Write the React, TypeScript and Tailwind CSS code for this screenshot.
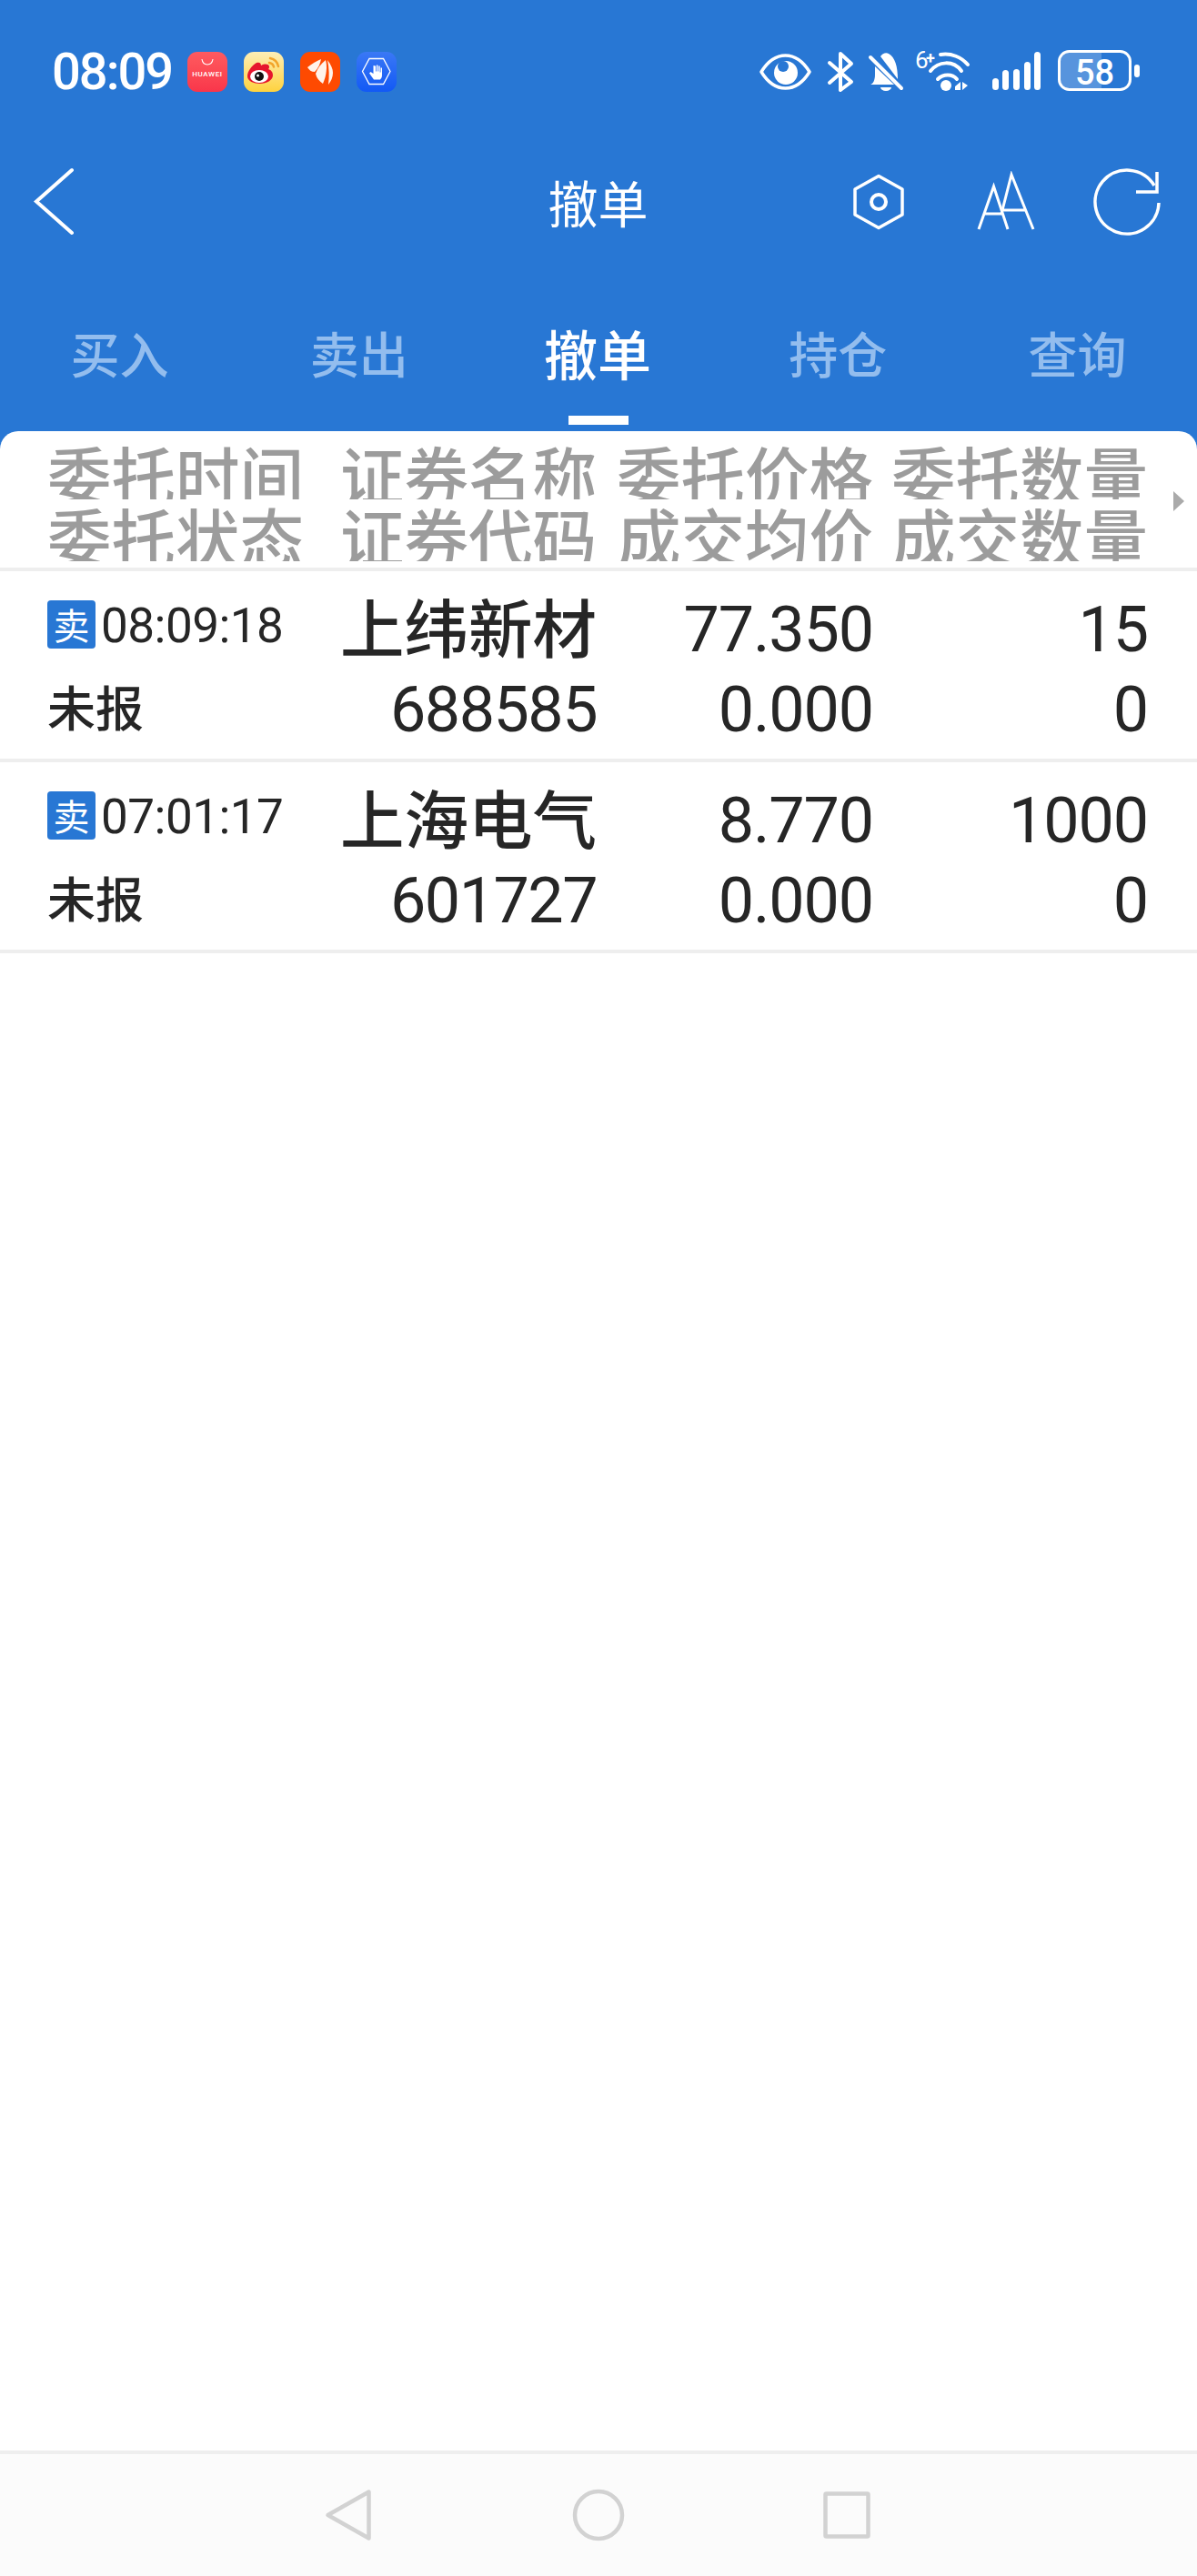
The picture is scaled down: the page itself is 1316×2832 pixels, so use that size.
const cjk = "font-['Noto_Sans_CJK_SC',sans-serif]"
const num = "font-['Roboto',sans-serif]"

const tabs = ["买入", "卖出", "撤单", "持仓", "查询"]

const headers = [
  ["委托时间", "证券名称", "委托价格", "委托数量"],
  ["委托状态", "证券代码", "成交均价", "成交数量"],
]

const orders = [
  { time: "08:09:18", status: "未报", name: "上纬新材", code: "688585", price: "77.350", avg: "0.000", qty: "15", done: "0" },
  { time: "07:01:17", status: "未报", name: "上海电气", code: "601727", price: "8.770", avg: "0.000", qty: "1000", done: "0" },
]

function HuaweiIcon() {
  return (
    <div className="w-[44px] h-[44px] rounded-[11px] bg-gradient-to-b from-[#ff5a5f] to-[#f9354a] flex flex-col items-center pt-[8px]">
      <svg width="14" height="7" viewBox="0 0 14 7" fill="none" stroke="#fff" strokeWidth="1.1"><path d="M1 0c.5 4 3 6 6 6s5.500-2 6-6" /></svg>
      <span className={`mt-[5px] text-[8px] leading-[9px] tracking-[0.6px] font-medium text-white ${num}`}>HUAWEI</span>
    </div>
  )
}

function WeiboIcon() {
  return (
    <svg width="44" height="44" viewBox="0 0 44 44">
      <defs>
        <linearGradient id="wb" x1="0" y1="0" x2="0" y2="1">
          <stop offset="0" stopColor="#fdeeb6" />
          <stop offset="1" stopColor="#fed23e" />
        </linearGradient>
      </defs>
      <rect width="44" height="44" rx="11" fill="url(#wb)" />
      <path d="M4 27c0-6 5-12 10-15 3-1 5 0 5 3 4-2 8-2 9 1 0 1 0 2-1 3 3 1 5 3 5 7 0 5-7 9-14 9S4 32 4 27z" fill="#e6162d" />
      <ellipse cx="17" cy="27" rx="10" ry="7" fill="#fff" />
      <circle cx="17" cy="27" r="5" fill="#111" />
      <circle cx="15.500" cy="26" r="1.500" fill="#fff" />
      <path d="M29 7c5 1 8 4 9 9M28 12c3 .5 4.500 2 5 4.500" fill="none" stroke="#f2a42a" strokeWidth="2.500" strokeLinecap="round" />
    </svg>
  )
}

function TailIcon() {
  return (
    <svg width="44" height="44" viewBox="0 0 44 44">
      <rect width="44" height="44" rx="11" fill="#fe4a01" />
      <path d="M8 17c5-4 10-7 15-9-1 5-3 10-7 14-4 0-6-2-8-5z" fill="#fff3ea" />
      <path d="M17 24c2-6 6-11 11-15 2 7 1 17-3 26-4-3-7-6-8-11z" fill="#fff3ea" />
      <path d="M30 9c4 5 6 10 6 14 0 5-2 9-5 13 1-9 1-18-1-27z" fill="#fff3ea" />
    </svg>
  )
}

function ShieldIcon() {
  return (
    <svg width="44" height="44" viewBox="0 0 44 44">
      <defs>
        <linearGradient id="sh" x1="0" y1="0" x2="0" y2="1">
          <stop offset="0" stopColor="#3a78f5" />
          <stop offset="1" stopColor="#1259f5" />
        </linearGradient>
      </defs>
      <rect width="44" height="44" rx="11" fill="url(#sh)" />
      <path d="M14 7.500h15.500L37 21.500l-7.500 14H14L6.500 21.500z" fill="none" stroke="#fff" strokeWidth="1.300" />
      <path d="M18.500 15v9l-3-2-1.500 1.500 5 7h7c1.500-1.500 2-3 2-5v-8h-1.500v5h-.8v-7h-1.500v6h-.8v-7h-1.500v7h-.8v-6z" fill="#fff" />
    </svg>
  )
}

function StatusRight() {
  return (
    <svg width="420" height="54" viewBox="835 52 420 54" className="block">
      {/* eye */}
      <path d="M837 79C845 66 854 61 863.500 61S882 66 890 79C882 92 873 97 863.500 97S845 92 837 79z" fill="none" stroke="#fff" strokeWidth="3.500" strokeLinejoin="round" />
      <circle cx="864" cy="80" r="13" fill="#fff" />
      <circle cx="861" cy="73" r="6" fill="#2877d4" />
      {/* bluetooth */}
      <path d="M912 69L936 90L924 99V59L936 70L912 91" fill="none" stroke="#fff" strokeWidth="4" strokeLinecap="round" strokeLinejoin="round" />
      {/* muted bell */}
      <path d="M957 93c3-1 5-5 5-11v-9l21 20z" fill="#fff" />
      <path d="M968 62c2-3 6-5 9-3 7 4 10 14 10 28z" fill="#fff" />
      <path d="M968 96a6 4 0 0 0 12 0z" fill="#fff" />
      <path d="M957 63L991 97" stroke="#fff" strokeWidth="4" strokeLinecap="round" />
      {/* wifi */}
      <text x="1006" y="75" fill="#fff" fontSize="26" fontFamily="Roboto">6</text>
      <text x="1018" y="70" fill="#fff" fontSize="18" fontWeight="700" fontFamily="Roboto">+</text>
      <path d="M1034 60C1046 58 1057 63 1064 71M1023 78C1032 67 1048 66 1057 78M1031 87C1037 81 1047 81 1052 87" fill="none" stroke="#fff" strokeWidth="4" strokeLinecap="round" />
      <circle cx="1040" cy="94" r="6" fill="#fff" />
      <path d="M1050 95l6-5v9h-6zM1058 90l6 4-6 5z" fill="#fff" />
      {/* signal */}
      <rect x="1091" y="86" width="7" height="13" rx="3.500" fill="#fff" />
      <rect x="1102" y="77" width="7" height="22" rx="3.500" fill="#fff" />
      <rect x="1114" y="76" width="7" height="23" rx="3.500" fill="#fff" />
      <rect x="1126" y="68" width="7" height="31" rx="3.500" fill="#fff" />
      <rect x="1137" y="57" width="7" height="42" rx="3.500" fill="#fff" />
      {/* battery */}
      <path d="M1176 57h35v41h-35a10 10 0 0 1-10-10V67a10 10 0 0 1 10-10z" fill="#ffffff38" />
      <rect x="1164.500" y="56.500" width="78" height="42" rx="11" fill="none" stroke="#fff" strokeWidth="3" />
      <text x="1203.500" y="93" textAnchor="middle" fill="#fff" fontSize="38" fontWeight="500" fontFamily="Roboto">58</text>
      <rect x="1247" y="71" width="6" height="14" rx="3" fill="#fff" />
    </svg>
  )
}

function Back() {
  return (
    <svg width="50" height="78" viewBox="34 184 50 78" fill="none" stroke="#fff" strokeWidth="4">
      <path d="M79 188L40 222.500L79 257" strokeLinecap="round" />
    </svg>
  )
}

function HexIcon() {
  return (
    <svg width="62" height="68" viewBox="935 188 62 68" fill="none" stroke="#fff">
      <path d="M966 193.500L992 208V236L966 250.500L940 236V208z" strokeWidth="3.500" strokeLinejoin="round" />
      <circle cx="966" cy="222" r="8" strokeWidth="4" />
    </svg>
  )
}

function FontIcon() {
  return (
    <svg width="68" height="68" viewBox="1072 188 68 68" fill="none" stroke="#fff" strokeWidth="3">
      <path d="M1076 252L1092.500 205L1108 252M1082 235H1102" />
      <path d="M1101 235L1112 192L1136 252M1103 231H1128" />
    </svg>
  )
}

function RefreshIcon() {
  return (
    <svg width="78" height="78" viewBox="1200 184 78 78" fill="none" stroke="#fff" strokeWidth="3.500">
      <path d="M1269 205A35 35 0 1 0 1274 224" />
      <path d="M1272 190V212H1249" />
    </svg>
  )
}

export default function App() {
  return (
    <div className={`w-[1316px] h-[2832px] flex flex-col bg-[#2877d4] overflow-hidden ${cjk}`}>
      {/* status bar */}
      <div className="h-[158px] shrink-0 pl-[56px] pr-[61px] flex items-center">
        <span className={`w-[150px] pl-[1px] text-[56px] leading-none font-medium text-white tracking-[-2px] ${num}`}>08:09</span>
        <div className="flex gap-[18px] mr-auto">
          <HuaweiIcon />
          <WeiboIcon />
          <TailIcon />
          <ShieldIcon />
        </div>
        <StatusRight />
      </div>

      {/* title bar */}
      <div className="h-[128px] shrink-0 grid grid-cols-[1fr_auto_1fr] items-center">
        <div className="pl-[34px]"><Back /></div>
        <span className="text-[55px] leading-[62px] -ml-[1px] mb-[2px] text-white">撤单</span>
        <div className="flex justify-end items-center pr-[38px]">
          <HexIcon />
          <div className="w-[75px]" />
          <FontIcon />
          <div className="w-[60px]" />
          <RefreshIcon />
        </div>
      </div>

      {/* tabs */}
      <div className="h-[188px] shrink-0 grid grid-cols-5">
        {tabs.map((tab, i) => (
          <div key={tab} className="flex flex-col items-center pt-[68px]">
            <span className={i === 2 ? "text-[59px] leading-[68px] font-medium text-white -ml-[2px]" : "text-[54px] leading-[68px] font-medium text-[#93bdee]"}>{tab}</span>
            {i === 2 && <span className="mt-[35px] w-[66px] h-[10px] bg-white" />}
          </div>
        ))}
      </div>

      {/* list */}
      <div className="flex-1 bg-white rounded-t-[20px]">
        <div className="flex items-center pl-[52px] pt-[7px] pb-[7px] border-b-4 border-[#eeeeee]">
          <div className="grid grid-cols-[286px_318px_304px_302px]">
            {headers.flat().map((label, i) => (
              <div key={label + i} className={`h-[68px] overflow-hidden text-[70.5px] leading-[78px] font-medium text-[#9c9c9c] whitespace-nowrap ${i % 4 === 0 ? "text-left" : "text-right"}`}>
                {label}
              </div>
            ))}
          </div>
          <svg width="12" height="22" viewBox="0 0 12 22" className="ml-[28px] mt-[4px]"><path d="M0 0L12 11L0 22z" fill="#aaaaaa" /></svg>
        </div>

        {orders.map((o) => (
          <div key={o.code} className="pl-[52px] pt-[17px] pb-[11px] border-b-4 border-[#eeeeee] text-[#262626]">
            <div className="grid grid-cols-[286px_318px_304px_302px] grid-rows-[90px_88px]">
              <div className="flex items-start pt-[15px]">
                <span className="w-[53px] h-[53px] rounded-[4px] bg-[#2877d4] text-white text-[40px] leading-[53px] text-center">卖</span>
                <span className={`ml-[6px] text-[53px] leading-[57px] tracking-[-0.5px] ${num}`}>{o.time}</span>
              </div>
              <div className="text-right text-[70.5px] leading-[84px] font-medium whitespace-nowrap">{o.name}</div>
              <div className={`text-right text-[70px] leading-[94px] tracking-[-1.100px] ${num}`}>{o.price}</div>
              <div className={`text-right text-[70px] leading-[94px] tracking-[-1.100px] ${num}`}>{o.qty}</div>
              <div className="text-[53px] leading-[82px] font-medium">{o.status}</div>
              <div className={`text-right text-[70px] leading-[90px] tracking-[-1.500px] ${num}`}>{o.code}</div>
              <div className={`text-right text-[70px] leading-[90px] tracking-[-1.100px] ${num}`}>{o.avg}</div>
              <div className={`text-right text-[70px] leading-[90px] tracking-[-1.100px] ${num}`}>{o.done}</div>
            </div>
          </div>
        ))}
      </div>

      {/* nav bar */}
      <div className="h-[138px] shrink-0 bg-[#fbfbfb] border-t-4 border-[#eeeeee] flex items-center justify-center">
        <div className="w-[273px] flex justify-center">
          <svg width="60" height="60" viewBox="355 2735 60 60" fill="none" stroke="#d2d2d2" strokeWidth="4.500" strokeLinejoin="round">
            <path d="M405.500 2739.500V2790.500L360.500 2765z" />
          </svg>
        </div>
        <div className="w-[273px] flex justify-center">
          <svg width="60" height="60" viewBox="628 2735 60 60" fill="none" stroke="#d2d2d2" strokeWidth="4.500">
            <circle cx="658" cy="2765" r="26" />
          </svg>
        </div>
        <div className="w-[273px] flex justify-center">
          <svg width="60" height="60" viewBox="901 2735 60 60" fill="none" stroke="#d2d2d2" strokeWidth="4.500" strokeLinejoin="round">
            <rect x="907.500" y="2741.500" width="47" height="47" rx="1" />
          </svg>
        </div>
      </div>
    </div>
  )
}
